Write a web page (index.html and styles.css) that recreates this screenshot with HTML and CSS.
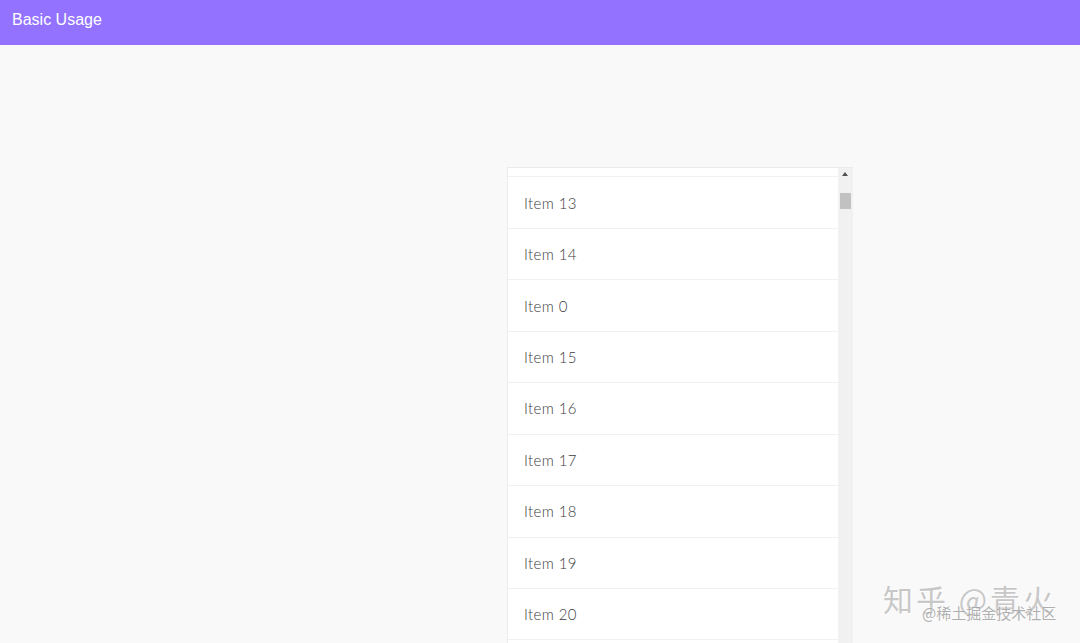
FILE: index.html
```html
<!doctype html>
<html lang='zh-CN'>
<head>
  <title>Basic Usage</title>
  <meta charset='utf-8'>
  <link rel="stylesheet" href="styles.css">
</head>
<body>
  <header class='bar'>Basic Usage</header>
  <main class='stage'>
    <div class='scroller'>
      <div class='viewport'>
        <ul class='list'>
          <li></li>
          <li>Item 13</li>
          <li>Item 14</li>
          <li>Item 0</li>
          <li>Item 15</li>
          <li>Item 16</li>
          <li>Item 17</li>
          <li>Item 18</li>
          <li>Item 19</li>
          <li>Item 20</li>
          <li></li>
        </ul>
      </div>
      <div class='track'>
        <span class='arrow'></span>
        <span class='thumb'></span>
      </div>
    </div>
  </main>
  <div class='mark'>
    <span class='mark-big'>知乎 @青火</span>
    <span class='mark-small'>@稀土掘金技术社区</span>
  </div>
</body>
</html>
```

FILE: styles.css
```css
*, html { box-sizing: border-box; }
html, body { margin: 0; height: 100%; }
body { background: #f9f9f9; font-family: "Liberation Sans", Arial, sans-serif; overflow: hidden; }

.bar { height: 45px; background: #9272ff; color: #fff; font-size: 16px; padding: 11px 12px; }

.stage { display: flex; justify-content: flex-start; padding: 122px 0 0 507px; }
.scroller { display: flex; width: 346px; height: 476px; background: #fff; border: 1px solid #ececec; border-right: 0; border-bottom: 0; }
.viewport { flex: 1; overflow: hidden; }
.list { list-style: none; margin: -42px 0 0 0; padding: 0; }
.list li { height: 51.44px; border-bottom: 1px solid #f0f0f0; padding: 0 0 0 16px; display: flex; align-items: center;
  font: 300 15px "Lato", "Noto Sans", sans-serif; color: #3c3c3c; letter-spacing: 0.4px; }

.track { width: 15px; background: #f1f1f1; position: relative; }
.arrow { position: absolute; left: 4px; top: 4px; width: 0; height: 0;
  border-left: 3px solid transparent; border-right: 3px solid transparent; border-bottom: 4px solid #505050; }
.thumb { position: absolute; left: 2px; top: 25px; width: 11px; height: 16px; background: #c1c1c1; }

.mark { position: absolute; left: 883px; top: 578px; width: 190px; height: 60px; }
.mark-big { position: absolute; left: 0; top: 0; font: 30px "Noto Sans CJK SC", sans-serif; color: rgba(165,165,165,0.6);
  letter-spacing: 3px; line-height: 40px; text-shadow: 1px 1px 0 rgba(255,255,255,0.8); }
.mark-small { position: absolute; left: 39px; top: 25px; font: 15px "Noto Sans CJK SC", sans-serif; color: rgba(150,150,150,0.75);
  line-height: 20px; text-shadow: 0 0 2px #fff; }
```
